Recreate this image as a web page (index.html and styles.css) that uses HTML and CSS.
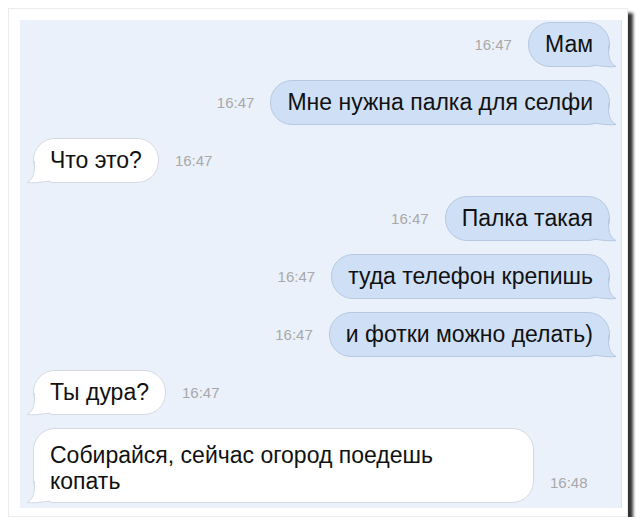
FILE: index.html
```html
<!DOCTYPE html>
<html lang="ru">
<head>
    <meta charset="UTF-8">
    <meta name="viewport" content="width=device-width, initial-scale=1.0">
    <title>Мам</title>
    <link rel="stylesheet" href="styles.css">
</head>
<body>
    <div class="frame">
        <div class="chat">
            <div class="row out">
                <span class="time">16:47</span>
                <div class="bubble">Мам<svg class="tail" viewBox="0 0 24 22"><path class="fill" d="M15.5 0 L15.5 5 C15.5 14 18 19 23 21.5 C17 22.5 8 21 0 20 L0 0 Z"/><path class="edge" d="M15.5 0 L15.5 5 C15.5 14 18 19 23 21.5 C17 22.5 8 21 0 20"/></svg></div>
            </div>
            <div class="row out">
                <span class="time">16:47</span>
                <div class="bubble">Мне нужна палка для селфи<svg class="tail" viewBox="0 0 24 22"><path class="fill" d="M15.5 0 L15.5 5 C15.5 14 18 19 23 21.5 C17 22.5 8 21 0 20 L0 0 Z"/><path class="edge" d="M15.5 0 L15.5 5 C15.5 14 18 19 23 21.5 C17 22.5 8 21 0 20"/></svg></div>
            </div>
            <div class="row in">
                <div class="bubble">Что это?<svg class="tail" viewBox="0 0 24 22"><path class="fill" d="M15.5 0 L15.5 5 C15.5 14 18 19 23 21.5 C17 22.5 8 21 0 20 L0 0 Z"/><path class="edge" d="M15.5 0 L15.5 5 C15.5 14 18 19 23 21.5 C17 22.5 8 21 0 20"/></svg></div>
                <span class="time">16:47</span>
            </div>
            <div class="row out">
                <span class="time">16:47</span>
                <div class="bubble">Палка такая<svg class="tail" viewBox="0 0 24 22"><path class="fill" d="M15.5 0 L15.5 5 C15.5 14 18 19 23 21.5 C17 22.5 8 21 0 20 L0 0 Z"/><path class="edge" d="M15.5 0 L15.5 5 C15.5 14 18 19 23 21.5 C17 22.5 8 21 0 20"/></svg></div>
            </div>
            <div class="row out">
                <span class="time">16:47</span>
                <div class="bubble">туда телефон крепишь<svg class="tail" viewBox="0 0 24 22"><path class="fill" d="M15.5 0 L15.5 5 C15.5 14 18 19 23 21.5 C17 22.5 8 21 0 20 L0 0 Z"/><path class="edge" d="M15.5 0 L15.5 5 C15.5 14 18 19 23 21.5 C17 22.5 8 21 0 20"/></svg></div>
            </div>
            <div class="row out">
                <span class="time">16:47</span>
                <div class="bubble">и фотки можно делать)<svg class="tail" viewBox="0 0 24 22"><path class="fill" d="M15.5 0 L15.5 5 C15.5 14 18 19 23 21.5 C17 22.5 8 21 0 20 L0 0 Z"/><path class="edge" d="M15.5 0 L15.5 5 C15.5 14 18 19 23 21.5 C17 22.5 8 21 0 20"/></svg></div>
            </div>
            <div class="row in">
                <div class="bubble">Ты дура?<svg class="tail" viewBox="0 0 24 22"><path class="fill" d="M15.5 0 L15.5 5 C15.5 14 18 19 23 21.5 C17 22.5 8 21 0 20 L0 0 Z"/><path class="edge" d="M15.5 0 L15.5 5 C15.5 14 18 19 23 21.5 C17 22.5 8 21 0 20"/></svg></div>
                <span class="time">16:47</span>
            </div>
            <div class="row in last">
                <div class="bubble long">Собирайся, сейчас огород поедешь<br>копать<svg class="tail" viewBox="0 0 24 22"><path class="fill" d="M15.5 0 L15.5 5 C15.5 14 18 19 23 21.5 C17 22.5 8 21 0 20 L0 0 Z"/><path class="edge" d="M15.5 0 L15.5 5 C15.5 14 18 19 23 21.5 C17 22.5 8 21 0 20"/></svg></div>
                <span class="time">16:48</span>
            </div>
        </div>
    </div>
</body>
</html>
```

FILE: styles.css
```css
body {
    margin: 0;
    background: #fff;
    font-family: "Liberation Sans", Arial, sans-serif;
    color: #111;
}
.frame {
    width: 602px;
    margin: 8px 0 0 8px;
    padding: 11px 5px 8px 11px;
    background: #fff;
    border: 1px solid #ececec;
    box-shadow: 5px 5px 3px rgba(0, 0, 0, 0.8);
}
.chat {
    background: #ebf1fa;
    border-right: 1px solid #dde2ea;
    padding: 2px 11px 5px 13px;
    display: flex;
    flex-direction: column;
    gap: 13px;
}
.row {
    display: flex;
    align-items: center;
    gap: 16px;
}
.row.out {
    justify-content: flex-end;
}
.row.last {
    align-items: flex-end;
}
.time {
    font-size: 15px;
    line-height: 17px;
    color: #a8a8a8;
}
.row.last .time {
    margin-bottom: 12px;
}
.bubble {
    position: relative;
    font-size: 23px;
    line-height: 27px;
    padding: 8px 16px;
    border-radius: 22px;
    border: 1px solid #b6c9e1;
    background: #cfe0f6;
}
.in .bubble {
    background: #fff;
    border-color: #d6dae0;
}
.bubble.long {
    width: 467px;
    padding-top: 13px;
    line-height: 26px;
}
.tail {
    position: absolute;
    right: -8px;
    bottom: -1px;
    width: 24px;
    height: 22px;
    overflow: visible;
}
.in .tail {
    right: auto;
    left: -8px;
    transform: scaleX(-1);
}
.tail .fill {
    fill: #cfe0f6;
}
.tail .edge {
    fill: none;
    stroke: #b6c9e1;
    stroke-width: 1;
}
.in .tail .fill {
    fill: #fff;
}
.in .tail .edge {
    stroke: #d6dae0;
}
```
